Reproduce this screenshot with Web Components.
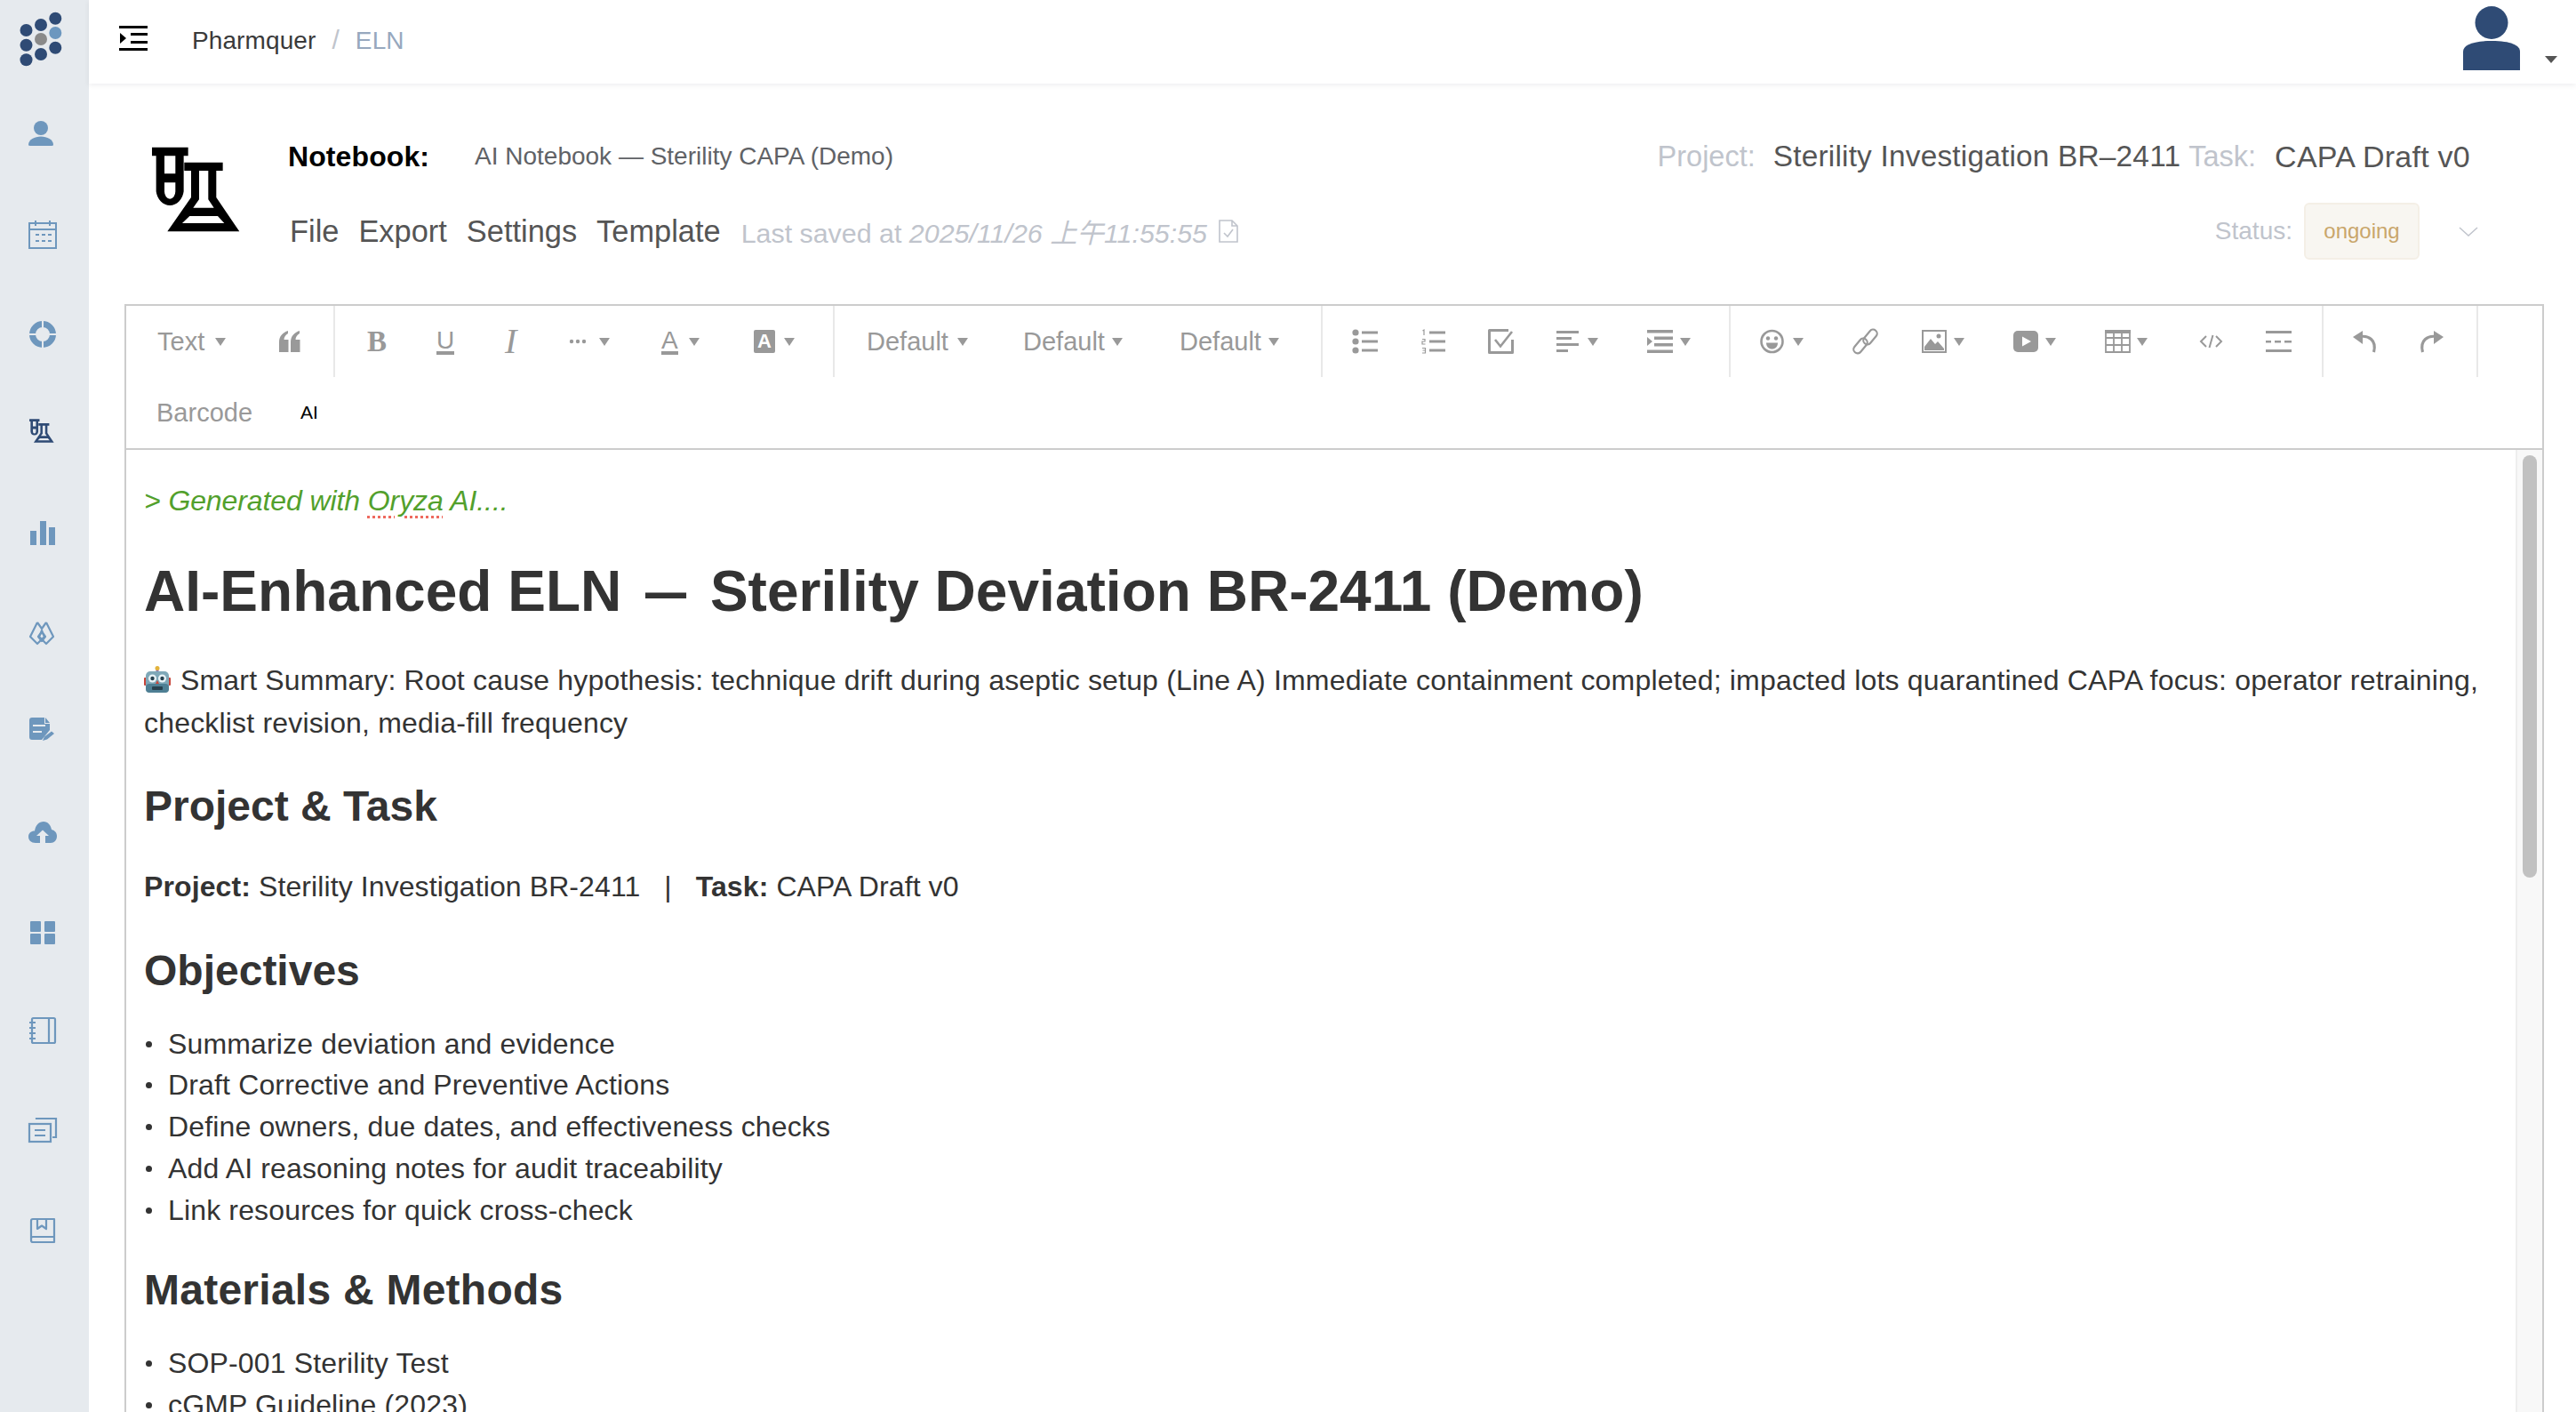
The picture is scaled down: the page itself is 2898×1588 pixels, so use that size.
<!DOCTYPE html>
<html lang="en">
<head>
<meta charset="utf-8">
<title>ELN</title>
<style>
html,body{margin:0;padding:0;height:100%;overflow:hidden;background:#fff}
body{font-family:"Liberation Sans","Noto Sans CJK SC",sans-serif;color:#333}
</style>
</head>
<body>
<x-app>
  <x-sidebar slot="side"></x-sidebar>
  <x-topbar slot="top"></x-topbar>
  <x-notebook-header slot="head"></x-notebook-header>
  <x-editor slot="editor">
    <x-toolbar slot="toolbar"></x-toolbar>
    <x-doc></x-doc>
  </x-editor>
</x-app>

<script>
const G='#999';
const FLASK=`<path fill-rule="evenodd" d="M513 496H635V525H620V645a47 55 0 0 1-93 0V525H513ZM555 525V585H592V525ZM555 615V645a18.5 25 0 0 0 37 0V615Z"/><path fill-rule="evenodd" d="M622 547H752V575H730V665L808 780H565L645 665V575H622ZM672 575V672L652 700H722L703 672V575ZM640 728L615 752H757L735 728Z"/>`;
const ICONS={
 /* ---- toolbar ---- */
 quote:[25,24,`<path fill="${G}" d="M1 13C1 6 5 2 11 0v3C8 5 6.500 7 6.500 10H11.500V24H1ZM14 13C14 6 18 2 24 0v3C21 5 19.500 7 19.500 10H24.500V24H14Z"/>`],
 dots:[20,6,`<g fill="${G}"><circle cx="3" cy="3" r="2.200"/><circle cx="10" cy="3" r="2.200"/><circle cx="17" cy="3" r="2.200"/></g>`],
 bullets:[29,28,`<g fill="${G}"><circle cx="4" cy="4" r="3.600"/><circle cx="4" cy="14" r="3.600"/><circle cx="4" cy="24" r="3.600"/><rect x="11" y="2.500" width="18" height="3"/><rect x="11" y="12.500" width="18" height="3"/><rect x="11" y="22.500" width="18" height="3"/></g>`],
 numbered:[27,28,`<g fill="${G}"><rect x="9" y="2.500" width="18" height="3"/><rect x="9" y="12.500" width="18" height="3"/><rect x="9" y="22.500" width="18" height="3"/></g><g fill="none" stroke="${G}" stroke-width="1.200"><path d="M1.500 2L3 1V7"/><path d="M1 11.500H4V14H1V17H4.500"/><path d="M1 21.500H4.500V27H1M1.500 24H4.500"/></g>`],
 check:[29,28,`<path fill="none" stroke="${G}" stroke-width="3" stroke-linejoin="round" d="M23 1.500H1.500V26.500H27.500V12"/><path fill="none" stroke="${G}" stroke-width="2.600" d="M8 12L14 19.500L27 3"/>`],
 align:[25,24,`<g fill="${G}"><rect width="25" height="3" y="0"/><rect width="17" height="3" y="7"/><rect width="25" height="3" y="14"/><rect width="13" height="3" y="21"/></g>`],
 indent:[29,26,`<g fill="${G}"><rect width="29" height="3.500" y="0"/><rect x="8" width="21" height="3.500" y="7.500"/><rect x="8" width="21" height="3.500" y="15"/><rect width="29" height="3.500" y="22.500"/><path d="M0 8L6 13L0 18Z"/></g>`],
 emoji:[27,28,`<circle cx="13.500" cy="14" r="12" fill="none" stroke="${G}" stroke-width="2.600"/><circle cx="9" cy="10.500" r="2.200" fill="${G}"/><circle cx="18" cy="10.500" r="2.200" fill="${G}"/><path fill="${G}" d="M7 15.500H20C20 20 17 22.500 13.500 22.500S7 20 7 15.500Z"/>`],
 link:[29,28,`<g fill="none" stroke="${G}" stroke-width="2.200"><rect x="-0.500" y="14.500" width="19" height="9" rx="4.500" transform="rotate(-50 9 19)"/><rect x="10.500" y="4.500" width="19" height="9" rx="4.500" transform="rotate(-50 20 9)"/></g>`],
 image:[28,26,`<rect x="1" y="1" width="26" height="24" fill="none" stroke="${G}" stroke-width="2"/><path fill="${G}" d="M3 23V19L10 10L15 16L18 13L25 21V23Z"/><circle cx="19" cy="7" r="2.500" fill="${G}"/>`],
 video:[28,24,`<rect width="28" height="24" rx="5" fill="${G}"/><path d="M10 6.500L20 12L10 17.500Z" fill="#fff"/>`],
 table:[29,26,`<path fill="none" stroke="${G}" stroke-width="1.800" d="M1 1H28V25H1ZM10 1V25M19 1V25M1 9H28M1 17H28"/><rect width="29" height="4" fill="${G}"/>`],
 code:[27,14,`<path fill="none" stroke="${G}" stroke-width="2" d="M8 1L2 7L8 13M19 1L25 7L19 13M15.500 0L11.500 14"/>`],
 hr:[29,24,`<g fill="${G}"><rect width="29" height="3"/><rect y="21" width="29" height="3"/><rect y="11" x="0" width="6" height="2.500"/><rect y="11" x="10" width="7" height="2.500"/><rect y="11" x="21" width="8" height="2.500"/></g>`],
 undo:[26,25,`<path fill="none" stroke="${G}" stroke-width="3.200" d="M6 7C18 4 27 11 23.500 24"/><path fill="${G}" d="M0 7L11 0V15Z"/>`],
 redo:[26,25,`<path fill="none" stroke="${G}" stroke-width="3.200" d="M20 7C8 4 -1 11 2.500 24"/><path fill="${G}" d="M26 7L15 0V15Z"/>`],
 /* ---- sidebar ---- */
 person:[28,28,`<circle cx="14" cy="8" r="8" fill="#6e97bd"/><path fill="#6e97bd" d="M0 27C0 21 7 17.500 14 17.500S28 21 28 27Q28 28 26 28H2Q0 28 0 27Z"/>`],
 calendar:[32,32,`<g fill="none" stroke="#6e97bd" stroke-width="2"><rect x="1" y="3" width="30" height="28"/><path d="M1 10H31M8 0V6M24 0V6"/></g><g fill="#6e97bd"><rect x="8" y="15" width="4" height="2"/><rect x="15" y="15" width="4" height="2"/><rect x="22" y="15" width="4" height="2"/><rect x="8" y="22" width="4" height="2"/><rect x="15" y="22" width="4" height="2"/><rect x="22" y="22" width="4" height="2"/></g>`],
 target:[30,30,`<circle cx="15" cy="15" r="11.500" fill="none" stroke="#6e97bd" stroke-width="7"/><path stroke="#e6eaee" stroke-width="2" d="M15 0V9M15 21V30M0 15H9M21 15H30"/>`],
 flaskdark:[28,27,`<g fill="#2f4b75" transform="translate(-47.900 -46.100) scale(.0935)">${FLASK}</g>`],
 bars:[28,27,`<g fill="#6e97bd"><rect y="11" width="7" height="16"/><rect x="11" width="7" height="27"/><rect x="21" y="7" width="7" height="20"/></g>`],
 drops:[28,27,`<g fill="none" stroke="#6e97bd" stroke-width="2.200" stroke-linejoin="round"><path d="M9 1L1 17L9 25L17 17L13.500 9.500"/><path d="M19 1L27 17L19 25L11 17L14.500 9.500M9 1L14 8L19 1"/><path d="M14 11.500L10 17L14 22L18 17Z"/></g>`],
 note:[28,28,`<path fill="#6e97bd" d="M3 0H17V7H23V14L14 25H3Q0 25 0 22V3Q0 0 3 0ZM18 0L23 6H18Z"/><g stroke="#e6eaee" stroke-width="2"><path d="M4 9H18M4 16H14"/></g><path fill="#6e97bd" d="M15 26L17 21.500L25 15.500L28 18L20 24.500Z"/>`],
 cloud:[32,24,`<path fill="#6e97bd" d="M8 24C3 24 0 21 0 17S3 10.500 7 10.500C8 4 12 0 17 0S25 4 26 9C30 10 32 13 32 16.500C32 21 29 24 25 24H19V16H23L16 9.500L9 16H13V24Z"/>`],
 grid:[28,26,`<g fill="#6e97bd"><rect width="12" height="12" rx="1"/><rect x="16" width="12" height="12" rx="1"/><rect y="14" width="12" height="12" rx="1"/><rect x="16" y="14" width="12" height="12" rx="1"/></g>`],
 book1:[30,30,`<g fill="none" stroke="#6e97bd" stroke-width="2.200"><rect x="3" y="1" width="26" height="28" rx="1.500"/><path d="M22 1V29M0 6H7M0 12H7M0 18H7M0 24H7"/></g>`],
 copy:[32,28,`<g fill="none" stroke="#6e97bd" stroke-width="2.200"><rect x="1" y="7" width="24" height="20"/><path d="M9 2V1H31V22H27M7 14H19M7 20H19"/></g>`],
 book2:[28,28,`<g fill="none" stroke="#6e97bd" stroke-width="2.200" stroke-linejoin="round"><path d="M27 21V1H3Q1 1 1 3V25Q1 27 3 27H27V21H3Q1 21 1 23"/><path d="M8 1V12L13 8.500L18 12V1"/></g>`],
 /* ---- misc ---- */
 logo:[70,70,`<g fill="#2f4b75"><circle cx="62.300" cy="20.700" r="7"/><circle cx="46" cy="28" r="7"/><circle cx="29.500" cy="34" r="7"/><circle cx="29.500" cy="50.700" r="7"/><circle cx="62.300" cy="53.700" r="7"/><circle cx="46" cy="61" r="7"/><circle cx="29.500" cy="67.300" r="7"/></g><circle cx="62.300" cy="37" r="7" fill="#6c97bf"/><circle cx="46" cy="44" r="7" fill="#8a8a8a"/>`],
 burger:[32,28,`<g fill="#000"><rect width="32" height="3"/><rect y="25" width="32" height="3"/><rect x="13" y="8" width="19" height="3"/><rect x="13" y="17" width="19" height="3"/><path d="M1 8L8 14L1 20Z"/></g>`],
 avatar:[64,72,`<g fill="#2f4b75"><ellipse cx="32" cy="18.500" rx="18.500" ry="18.500"/><path d="M0 72V51C0 44 10 39 32 39S64 44 64 51V72Z"/></g>`],
 flask:[100,96,`<g fill="#000" transform="translate(-170 -164.670) scale(.3333)">${FLASK}</g>`],
 saved:[22,26,`<g fill="none" stroke="#c0c4cc" stroke-width="1.600"><path d="M1 1H15L21 7V25H1ZM15 1V7H21"/><path d="M6 15L10 19L16 11"/></g>`],
 chevron:[22,11,`<path fill="none" stroke="#c0c4cc" stroke-width="1.500" d="M1 1L11 10L21 1"/>`],
 robot:[30,30,`<rect x="13.500" y="3" width="3" height="4" fill="#8d6fb5"/><circle cx="15" cy="2.500" r="2.500" fill="#e2b33c"/><rect x="0" y="13" width="3" height="9" rx="1" fill="#c8453a"/><rect x="27" y="13" width="3" height="9" rx="1" fill="#c8453a"/><rect x="2" y="6" width="26" height="24" rx="5" fill="#7fa8b8"/><rect x="2" y="20" width="26" height="10" rx="4" fill="#4e7f94"/><circle cx="9.500" cy="14" r="4.500" fill="#e9f3f7"/><circle cx="20.500" cy="14" r="4.500" fill="#e9f3f7"/><circle cx="9.500" cy="14" r="2.200" fill="#26414f"/><circle cx="20.500" cy="14" r="2.200" fill="#26414f"/><path d="M15 16L17 20H13Z" fill="#c8453a"/><rect x="9" y="23" width="12" height="4" rx="1" fill="#26414f"/>`]
};

function shadow(el,html){el.attachShadow({mode:'open'}).innerHTML=html;}

class XIcon extends HTMLElement{
  connectedCallback(){
    if(this.shadowRoot)return;
    const [w,h,body]=ICONS[this.getAttribute('name')];
    shadow(this,`<style>:host{display:inline-flex;flex:none;line-height:0}svg{display:block;overflow:visible}</style><svg width="${w}" height="${h}" viewBox="0 0 ${w} ${h}" aria-hidden="true">${body}</svg>`);
  }
}
customElements.define('x-icon',XIcon);

class XApp extends HTMLElement{
  constructor(){super();shadow(this,`<style>
    :host{display:grid;grid-template-columns:100px 1fr;grid-template-rows:94px auto 1fr;width:100vw;height:100vh;overflow:hidden}
  </style>
  <slot name="side"></slot><slot name="top"></slot><slot name="head"></slot><slot name="editor"></slot>`);}
}
customElements.define('x-app',XApp);

class XNavIcon extends HTMLElement{
  constructor(){super();
    const h=this.getAttribute('h');
    shadow(this,`<style>:host{display:flex;align-items:center;justify-content:center;height:${h}px;margin-left:${this.getAttribute('ml')||0}px}</style><slot></slot>`);}
}
customElements.define('x-nav-icon',XNavIcon);

class XSidebar extends HTMLElement{
  constructor(){super();
    const rows=[['person',112,-2],['calendar',116],['target',108],['flaskdark',109,-1],['bars',120],['drops',106,-1],['note',112,-1],['cloud',117],['grid',110],['book1',110],['copy',114],['book2',111]];
    shadow(this,`<style>
      :host{display:flex;flex-direction:column;grid-row:1/4;background:#e6eaee;height:100%;overflow:hidden;width:100px}
      .logo{height:94px;flex:none;position:relative}
      .logo x-icon{position:absolute;left:0;top:0}
      x-nav-icon{width:96px}
    </style>
    <div class="logo"><x-icon name="logo"></x-icon></div>
    <div class="list">${rows.map(r=>`<x-nav-icon h="${r[1]}" ml="${r[2]||0}"><x-icon name="${r[0]}"></x-icon></x-nav-icon>`).join('')}</div>`);
  }
}
customElements.define('x-sidebar',XSidebar);

class XTopbar extends HTMLElement{
  constructor(){super();shadow(this,`<style>
    :host{display:flex;align-items:center;height:94px;background:#fff;box-shadow:0 2px 6px rgba(0,21,41,.07);position:relative;z-index:2;font-size:28px;color:#3a3a3a}
    .burger{margin-left:34px;margin-right:50px;margin-top:-8px}
    .sep{color:#c0c4cc;margin:0 18px 0 18px;font-size:30px}
    .cur{color:#97a8be}
    .crumb{margin-top:-5px;letter-spacing:.1px}
    .sp{flex:1}
    .av{position:relative;width:127px;height:94px}
    .av x-icon{position:absolute;left:0;top:7px}
    .caret{position:absolute;left:92px;top:63px;width:0;height:0;border-left:7px solid transparent;border-right:7px solid transparent;border-top:8px solid #555}
  </style>
  <x-icon class="burger" name="burger"></x-icon>
  <div class="crumb"><span>Pharmquer</span><span class="sep">/</span><span class="cur">ELN</span></div>
  <div class="sp"></div>
  <div class="av"><x-icon name="avatar"></x-icon><span class="caret"></span></div>`);}
}
customElements.define('x-topbar',XTopbar);

class XNotebookHeader extends HTMLElement{
  constructor(){super();shadow(this,`<style>
    :host{display:flex;height:248px;box-sizing:border-box;padding:40px 110px 40px 70px;background:#fff}
    .flask{margin-top:31px;margin-right:54px}
    .c{flex:1;display:flex;flex-direction:column;min-width:0}
    .r{height:84px;display:flex;align-items:center}
    .nb{font-weight:700;font-size:32px;color:#000;width:210px;letter-spacing:.1px}
    .title{font-size:28px;color:#606266}
    .sp{flex:1}
    .lab{color:#c0c4cc;font-size:32.500px}
    .val{color:#555;font-size:34px;letter-spacing:.25px}
    .v1{margin:0 9px 0 20px;font-size:33.400px;letter-spacing:.2px}
    .v2{margin:0 9px 0 21px}
    .menu{font-size:34.400px;color:#555;margin-right:22px}
    .menu:first-child{margin-left:2px}
    .saved{font-size:30.400px;color:#c0c4cc;margin-left:1px}
    .saved i{font-style:italic}
    .si{margin-left:13px}
    .st{font-size:28px}
    .tag{box-sizing:border-box;width:130px;height:64px;margin-left:13px;display:flex;align-items:center;justify-content:center;background:#f8f6f1;border:2px solid #f4efe6;border-radius:6px;color:#c9a66b;font-size:24px}
    .chev{margin-left:44px}
  </style>
  <x-icon class="flask" name="flask"></x-icon>
  <div class="c">
    <div class="r">
      <span class="nb">Notebook:</span><span class="title">AI Notebook — Sterility CAPA (Demo)</span>
      <span class="sp"></span>
      <span class="lab">Project:</span><span class="val v1">Sterility Investigation BR–2411</span><span class="lab">Task:</span><span class="val v2">CAPA Draft v0</span>
    </div>
    <div class="r">
      <span class="menu">File</span><span class="menu">Export</span><span class="menu">Settings</span><span class="menu">Template</span>
      <span class="saved">Last saved at <i>2025/11/26 上午11:55:55</i></span><x-icon class="si" name="saved"></x-icon>
      <span class="sp"></span>
      <span class="lab st">Status:</span><span class="tag">ongoing</span><x-icon class="chev" name="chevron"></x-icon>
    </div>
  </div>`);}
}
customElements.define('x-notebook-header',XNotebookHeader);

class XEditor extends HTMLElement{
  constructor(){super();shadow(this,`<style>
    :host{display:flex;flex-direction:column;margin:0 36px 0 40px;border:2px solid #ccc;border-bottom:0;min-height:0;overflow:hidden;background:#fff}
    .body{flex:1;min-height:0;display:flex;overflow:hidden}
    .bar{width:30px;flex:none;box-sizing:border-box;background:#f8f8f8;border-left:2px solid #eee;padding:6px 6px 0 6px}
    .thumb{width:16px;height:475px;border-radius:8px;background:#c1c1c1}
    .main{flex:1;min-width:0;overflow:hidden}
  </style>
  <slot name="toolbar"></slot>
  <div class="body"><div class="main"><slot></slot></div><div class="bar"><div class="thumb"></div></div></div>`);}
}
customElements.define('x-editor',XEditor);

class XTool extends HTMLElement{
  constructor(){super();
    const w=this.getAttribute('w'),g=this.getAttribute('gap');
    shadow(this,`<style>
      :host{display:flex;align-items:center;flex:none;width:${w}px;height:80px;box-sizing:border-box;font-size:29px;color:${G};white-space:nowrap}
      .c{width:0;height:0;margin-left:${g}px;margin-top:1px;border-left:6px solid transparent;border-right:6px solid transparent;border-top:9px solid ${G};display:${g===null?'none':'block'}}
    </style><slot></slot><span class="c"></span>`);}
}
customElements.define('x-tool',XTool);

class XSep extends HTMLElement{
  constructor(){super();shadow(this,`<style>:host{display:block;flex:none;box-sizing:border-box;width:${this.getAttribute('w')}px;height:80px;border-left:2px solid #e8e8e8}</style>`);}
}
customElements.define('x-sep',XSep);

class XToolbar extends HTMLElement{
  constructor(){super();
    const ic=n=>`<x-icon name="${n}"></x-icon>`;
    shadow(this,`<style>
      :host{display:block;border-bottom:2px solid #ccc;height:160px;background:#fff}
      .row{display:flex;height:80px;padding-left:35px}
      .row2{padding-left:34px}
      .b{font:700 33px "Liberation Serif",serif;line-height:1}
      .u,.a{font:400 28px "Liberation Sans",sans-serif;line-height:1;display:inline-block;border-bottom:4px solid ${G};height:26px}
      .i{font:italic 400 40px "Liberation Serif",serif;line-height:1;margin-left:2px}
      .box{display:inline-flex;width:24px;height:26px;align-items:center;justify-content:center;background:${G};color:#fff;border-radius:2px;font:700 22px "Liberation Sans",sans-serif}
      .ai{color:#000;font-size:21px}
    </style>
    <div class="row">
      <x-tool w="136" gap="12">Text</x-tool>
      <x-tool w="62">${ic('quote')}</x-tool>
      <x-sep w="38"></x-sep>
      <x-tool w="78"><span class="b">B</span></x-tool>
      <x-tool w="75"><span class="u">U</span></x-tool>
      <x-tool w="74"><span class="i">I</span></x-tool>
      <x-tool w="104" gap="14">${ic('dots')}</x-tool>
      <x-tool w="104" gap="12"><span class="a">A</span></x-tool>
      <x-tool w="89" gap="10"><span class="box">A</span></x-tool>
      <x-sep w="38"></x-sep>
      <x-tool w="176" gap="10">Default</x-tool>
      <x-tool w="176" gap="8">Default</x-tool>
      <x-tool w="159" gap="8">Default</x-tool>
      <x-sep w="35"></x-sep>
      <x-tool w="78">${ic('bullets')}</x-tool>
      <x-tool w="75">${ic('numbered')}</x-tool>
      <x-tool w="77">${ic('check')}</x-tool>
      <x-tool w="102" gap="10">${ic('align')}</x-tool>
      <x-tool w="92" gap="8">${ic('indent')}</x-tool>
      <x-sep w="35"></x-sep>
      <x-tool w="104" gap="10">${ic('emoji')}</x-tool>
      <x-tool w="78">${ic('link')}</x-tool>
      <x-tool w="103" gap="8">${ic('image')}</x-tool>
      <x-tool w="103" gap="8">${ic('video')}</x-tool>
      <x-tool w="106" gap="7">${ic('table')}</x-tool>
      <x-tool w="75">${ic('code')}</x-tool>
      <x-tool w="63">${ic('hr')}</x-tool>
      <x-sep w="35"></x-sep>
      <x-tool w="76">${ic('undo')}</x-tool>
      <x-tool w="63">${ic('redo')}</x-tool>
      <x-sep w="2"></x-sep>
    </div>
    <div class="row row2">
      <x-tool w="162">Barcode</x-tool>
      <x-tool w="60"><span class="ai">AI</span></x-tool>
    </div>`);}
}
customElements.define('x-toolbar',XToolbar);

class XDoc extends HTMLElement{
  constructor(){super();shadow(this,`<style>
    :host{display:block;padding:34px 20px 0 20px;font-size:32px;line-height:47px;color:#333;letter-spacing:.15px}
    p{margin:0}
    h1{margin:42px 0 0;font-size:64px;line-height:72px;font-weight:700;letter-spacing:.02px}
    h1 .d{display:inline-block;transform:scaleX(.72)}
    h2{margin:42px 0 0;font-size:48px;line-height:56px;font-weight:700;letter-spacing:0}
    h2.o{margin-top:42.500px}
    h2.m{margin-top:39px;letter-spacing:.25px}
    .gen{color:#52a02c;font-style:italic;letter-spacing:-.1px}
    .sp{text-decoration:underline dotted #ee6a5f 3px;text-underline-offset:6px}
    .sum{margin-top:40px;line-height:48px;letter-spacing:.18px}
    .rb{display:inline-flex;vertical-align:-3px;margin-right:11px}
    .pj{margin-top:39px;letter-spacing:.1px}
    ul{margin:31px 0 0;padding:0;list-style:none}
    li{position:relative;padding-left:27px;height:46.750px;line-height:46.750px}
    li::before{content:"";position:absolute;left:2px;top:20px;width:7px;height:7px;border-radius:50%;background:#333}
    b{font-weight:700}
  </style>
  <p class="gen">&gt; Generated with <span class="sp">Oryza</span> AI....</p>
  <h1>AI-Enhanced ELN <span class="d">—</span> Sterility Deviation BR-2411 (Demo)</h1>
  <p class="sum"><x-icon class="rb" name="robot"></x-icon>Smart Summary: Root cause hypothesis: technique drift during aseptic setup (Line A) Immediate containment completed; impacted lots quarantined CAPA focus: operator retraining, checklist revision, media-fill frequency</p>
  <h2>Project &amp; Task</h2>
  <p class="pj"><b>Project:</b> Sterility Investigation BR-2411 &nbsp; | &nbsp; <b>Task:</b> CAPA Draft v0</p>
  <h2 class="o">Objectives</h2>
  <ul><li>Summarize deviation and evidence</li><li>Draft Corrective and Preventive Actions</li><li>Define owners, due dates, and effectiveness checks</li><li>Add AI reasoning notes for audit traceability</li><li>Link resources for quick cross-check</li></ul>
  <h2 class="m">Materials &amp; Methods</h2>
  <ul><li>SOP-001 Sterility Test</li><li>cGMP Guideline (2023)</li></ul>`);}
}
customElements.define('x-doc',XDoc);
</script>
</body>
</html>
